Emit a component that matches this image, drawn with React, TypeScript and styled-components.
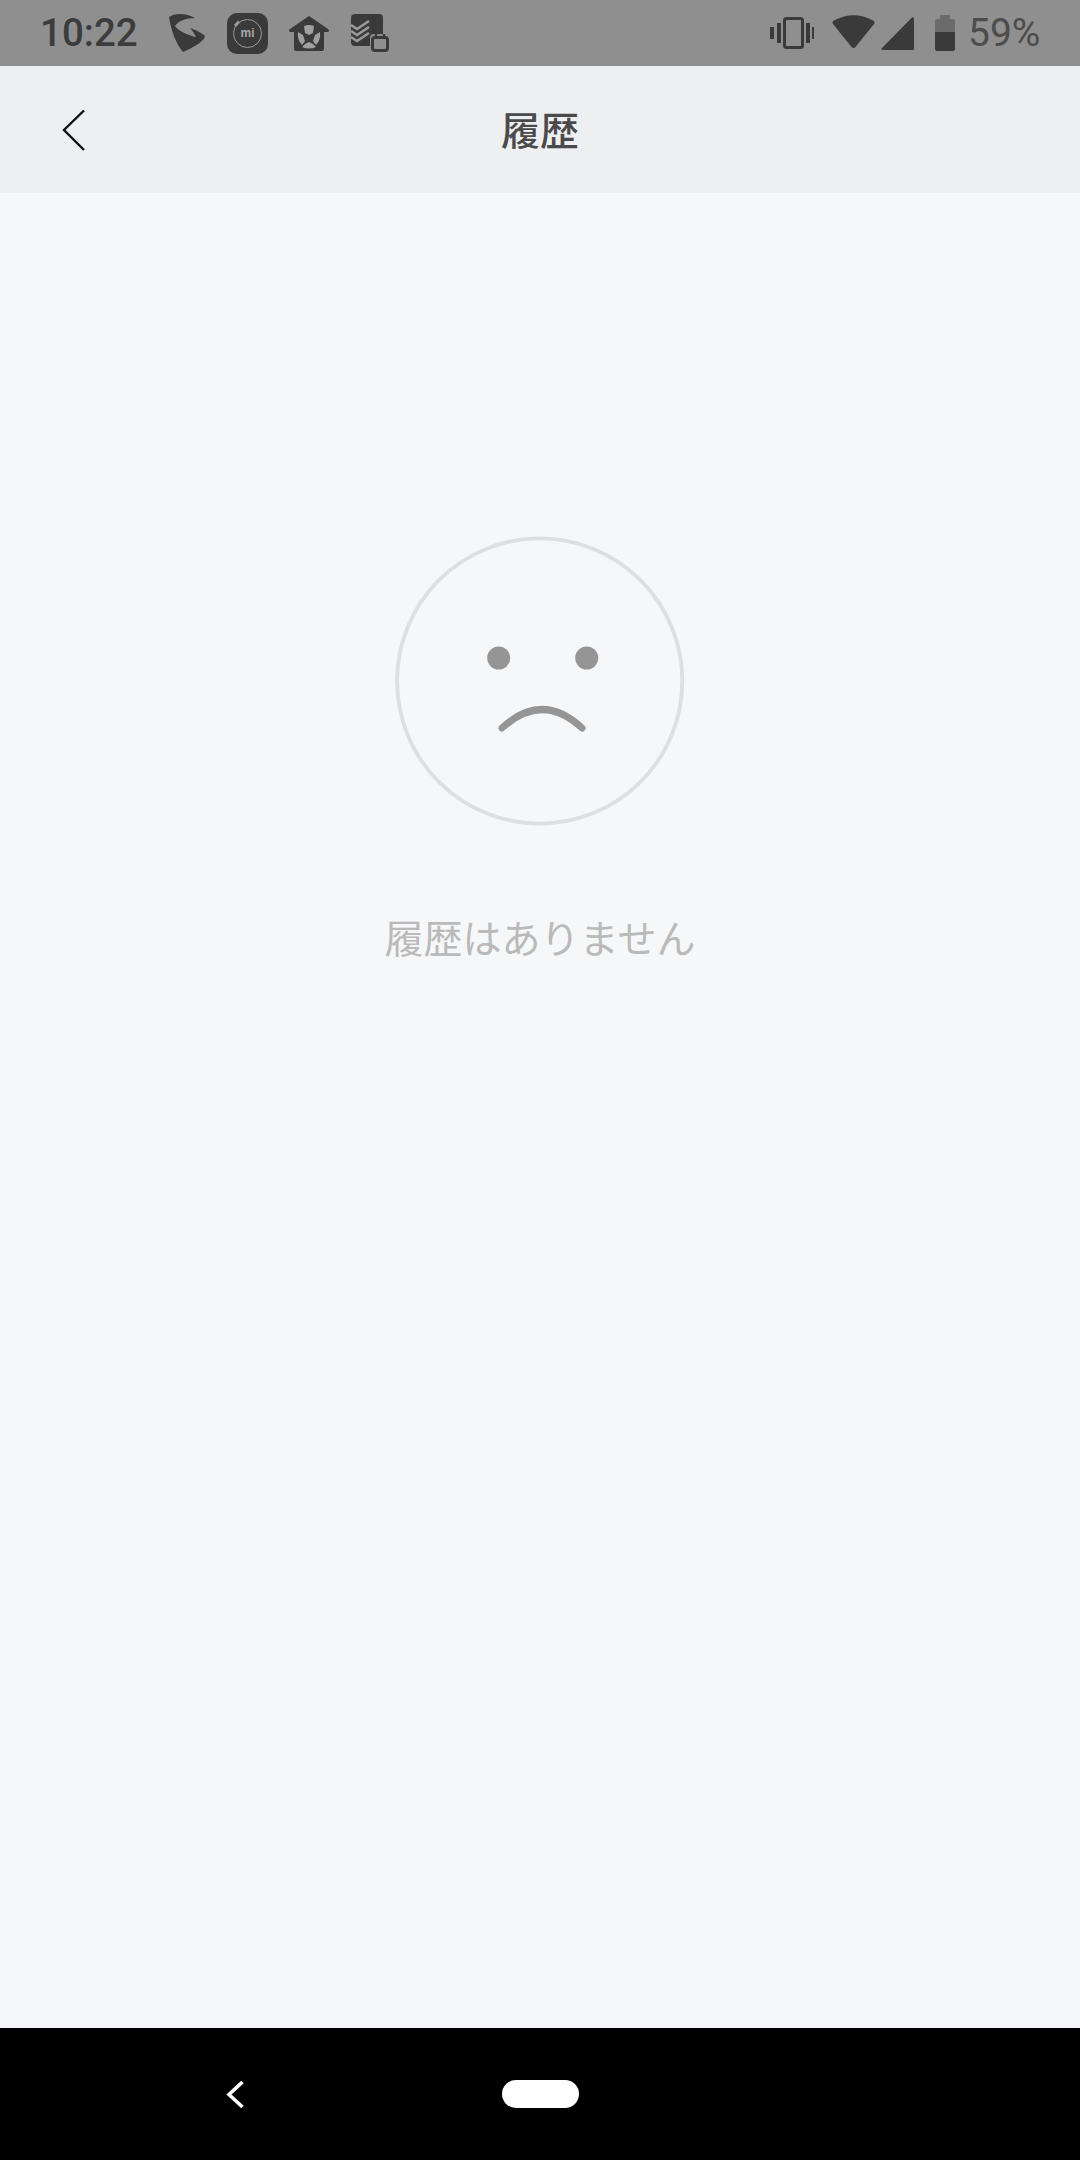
import React from "react";
import styled, { createGlobalStyle } from "styled-components";

const Global = createGlobalStyle`
  html, body { margin: 0; padding: 0; background: #f6f7f9; }
  #root { width: 1080px; height: 2160px; }
`;

const Screen = styled.div`
  width: 1080px;
  height: 2160px;
  display: flex;
  flex-direction: column;
  background: #f6f7f9;
  font-family: Roboto, "Noto Sans CJK JP", sans-serif;
`;

const StatusBar = styled.div`
  height: 66px;
  flex: none;
  display: flex;
  align-items: center;
  justify-content: space-between;
  padding: 0 40px;
  background: #8f8f8f;
`;

const StatusGroup = styled.div`
  display: flex;
  align-items: center;
`;

const Clock = styled.span`
  width: 96px;
  font-size: 38.5px;
  font-weight: 500;
  line-height: 66px;
  color: #3c3c3c;
`;

const Percent = styled.span`
  margin-left: 13px;
  width: 72px;
  font-size: 39px;
  line-height: 66px;
  color: #4c4c4c;
`;

const StatusIcon = styled.svg<{ $gap: number }>`
  display: block;
  height: 66px;
  flex: none;
  margin-left: ${(p) => p.$gap}px;
`;

const Header = styled.header`
  height: 127px;
  padding-bottom: 3px;
  box-sizing: border-box;
  flex: none;
  display: grid;
  grid-template-columns: 1fr auto 1fr;
  align-items: center;
  background: #eeeff1;
`;

const BackButton = styled.div`
  display: flex;
  align-items: center;
  padding-left: 62px;
  margin-top: 3px;
`;

const Title = styled.h1`
  margin: 0;
  font-family: "Noto Sans CJK JP", sans-serif;
  font-size: 39px;
  font-weight: 500;
  line-height: 56px;
  color: #4a4a4a;
`;

const Main = styled.main`
  flex: 1;
  display: flex;
  flex-direction: column;
  align-items: center;
  padding-top: 343px;
`;

const FaceIcon = styled.svg`
  display: block;
  width: 290px;
  height: 290px;
`;

const EmptyText = styled.p`
  margin: 82px 0 0;
  font-family: "Noto Sans CJK JP", sans-serif;
  font-size: 39px;
  font-weight: 400;
  line-height: 56px;
  color: #bababa;
`;

const NavBar = styled.nav`
  height: 132px;
  flex: none;
  display: grid;
  grid-template-columns: 1fr auto 1fr;
  align-items: center;
  background: #000;
`;

const NavBack = styled.div`
  display: flex;
  align-items: center;
  padding-left: 226px;
  margin-top: 1px;
`;

const HomePill = styled.div`
  width: 77px;
  height: 28px;
  border-radius: 14px;
  background: #fff;
`;

const D = "#3a3a3a";
const G = "#8f8f8f";

export default function App() {
  return (
    <Screen>
      <Global />
      <StatusBar>
        <StatusGroup>
          <Clock>10:22</Clock>
          <StatusIcon $gap={32} width={38} viewBox="168 0 38 66">
            <path
              fill={D}
              d="M169 17C175 13 186 13 195 18C186 18 178 21 175 26C178 31 190 36 196 37C194 33 192 30 190 28C196 30 202 33 205 36C205 40 195 47 183 52C176 44 171 30 169 17Z"
            />
          </StatusIcon>
          <StatusIcon $gap={21} width={41} viewBox="227 0 41 66">
            <rect x="227" y="13" width="41" height="41" rx="10" fill={D} />
            <circle cx="247.5" cy="33.5" r="14" fill="none" stroke="#9a9a9a" strokeWidth="1" />
            <line x1="235" y1="26" x2="239" y2="21.5" stroke="#9a9a9a" strokeWidth="3" />
            <text x="247.5" y="37" textAnchor="middle" fontFamily="Liberation Sans" fontWeight="700" fontSize="12" fill="#a8a8a8">
              mi
            </text>
          </StatusIcon>
          <StatusIcon $gap={20} width={41} viewBox="288 0 41 66">
            <path
              fill={D}
              d="M309 16L328 29Q330 31 328 32H324V49Q324 51 322 51H296Q294 51 294 49V32H290Q288 31 290 29Z"
            />
            <path
              fill="#a0a0a0"
              d="M304 26Q309 24 314 26L313 33L309 35L305 33ZM298 32L303 35L305 41L302 45Q297 40 298 32ZM320 32L315 35L313 41L316 45Q321 40 320 32ZM305 44L309 42L313 44L316 47Q309 50 302 47Z"
            />
          </StatusIcon>
          <StatusIcon $gap={21} width={39} viewBox="350 0 39 66">
            <rect x="351" y="14" width="32" height="32" rx="4" fill={D} />
            <path
              fill="none"
              stroke="#9a9a9a"
              strokeWidth="2.6"
              d="M351 25L357 29L369 21M351 31L357 35L369 27M351 37L357 41L369 33"
            />
            <rect x="370" y="34" width="20" height="18" rx="4" fill={G} />
            <rect x="372.5" y="37.5" width="15" height="13" rx="2.5" fill={G} stroke={D} strokeWidth="3" />
            <path stroke={D} strokeWidth="2.4" d="M376 34V38M384 34V38" />
          </StatusIcon>
        </StatusGroup>
        <StatusGroup>
          <StatusIcon $gap={0} width={44} viewBox="770 0 44 66">
            <rect x="784.5" y="18.5" width="18" height="29" rx="2" fill="none" stroke={D} strokeWidth="3" />
            <path fill={D} d="M770 27H774V39H770ZM777 23H781V43H777ZM806 23H810V43H806ZM812 27H814V39H812Z" />
          </StatusIcon>
          <StatusIcon $gap={18} width={43} viewBox="832 0 43 66">
            <path
              fill={D}
              d="M851.5 47L833 24Q831.5 22 834 20.5Q853.5 10 873 20.5Q875.5 22 874 24L855.5 47Q853.5 49 851.5 47Z"
            />
          </StatusIcon>
          <StatusIcon $gap={6} width={33} viewBox="881 0 33 66">
            <path fill={D} d="M912 17.5Q914 16.5 914 19V48.5Q914 50 912.5 50H882.5Q880.5 50 882 48Z" />
          </StatusIcon>
          <StatusIcon $gap={21} width={20} viewBox="935 0 20 66">
            <path fill="#6b6b6b" d="M940 15H950V19H953Q955 19 955 21V32H935V21Q935 19 937 19H940Z" />
            <path fill={D} d="M935 32H955V49Q955 51 953 51H937Q935 51 935 49Z" />
          </StatusIcon>
          <Percent>59%</Percent>
        </StatusGroup>
      </StatusBar>
      <Header>
        <BackButton>
          <svg width="24" height="42" viewBox="62 109 24 42">
            <path d="M84 110.5L64 130L84 150" fill="none" stroke="#111" strokeWidth="2.4" />
          </svg>
        </BackButton>
        <Title>履歴</Title>
        <span />
      </Header>
      <Main>
        <FaceIcon viewBox="0 0 290 290">
          <circle cx="144.7" cy="145" r="142.6" fill="none" stroke="#dedfe0" strokeWidth="3.8" />
          <circle cx="103.7" cy="122" r="11.5" fill="#959595" />
          <circle cx="191.7" cy="122" r="11.5" fill="#959595" />
          <path d="M107 192Q147 155 187 192" fill="none" stroke="#959595" strokeWidth="7" strokeLinecap="round" />
        </FaceIcon>
        <EmptyText>履歴はありません</EmptyText>
      </Main>
      <NavBar>
        <NavBack>
          <svg width="18" height="28" viewBox="226 2081 18 28">
            <path d="M242.5 2082L229 2094.5L242.5 2107" fill="none" stroke="#fff" strokeWidth="3.6" />
          </svg>
        </NavBack>
        <HomePill />
        <span />
      </NavBar>
    </Screen>
  );
}
